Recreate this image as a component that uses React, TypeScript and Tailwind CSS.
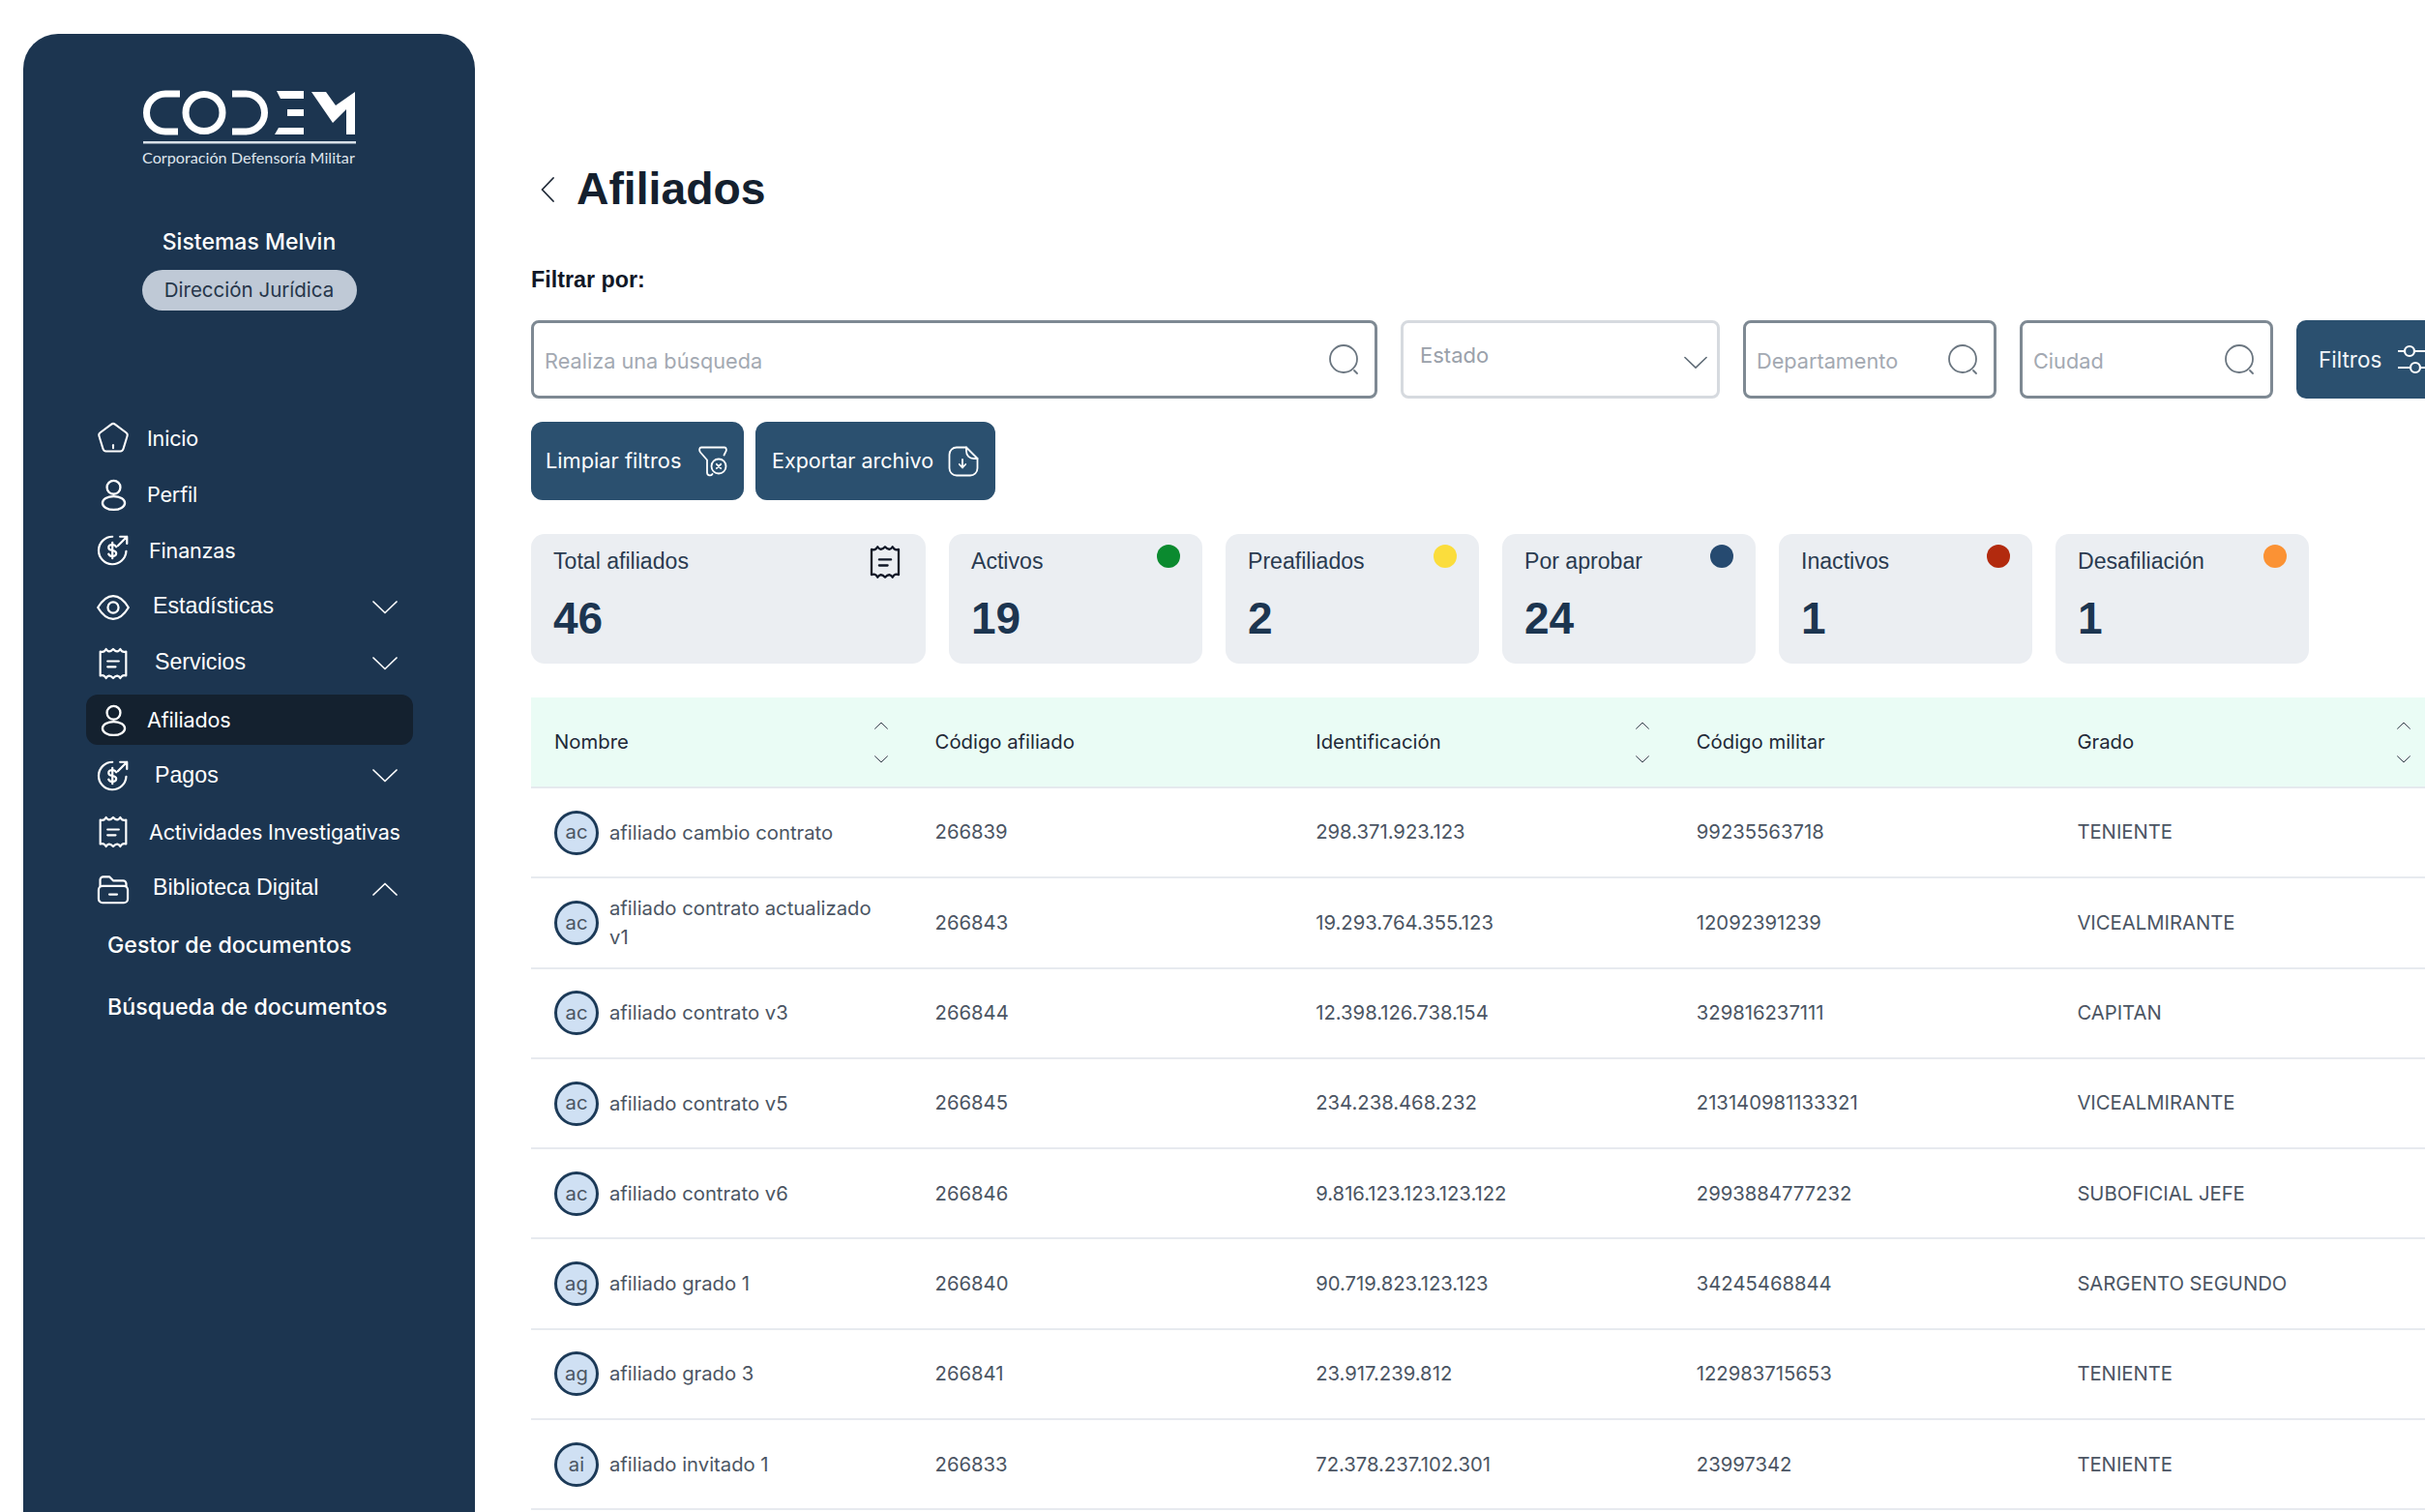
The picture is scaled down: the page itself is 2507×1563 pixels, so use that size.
import type { ReactNode } from "react";

const Svg = ({ children, className = "", strokeWidth = 1.5 }: { children: ReactNode; className?: string; strokeWidth?: number }) => (
  <svg viewBox="0 0 24 24" fill="none" stroke="currentColor" strokeWidth={strokeWidth} strokeLinecap="round" strokeLinejoin="round" className={`shrink-0 ${className}`}>
    {children}
  </svg>
);

const HomeIcon = () => (
  <Svg className="w-[38px] h-[38px]" strokeWidth={1.3}>
    <path d="M10.800 2.900a2 2 0 0 1 2.400 0l7.300 5.500a2 2 0 0 1 .7 2.200l-2.600 8.400a2 2 0 0 1-1.900 1.500H7.300a2 2 0 0 1-1.900-1.500L2.800 10.600a2 2 0 0 1 .7-2.200z" />
    <path d="M12 16.500v2" />
  </Svg>
);
const UserIcon = () => (
  <Svg className="w-[37px] h-[37px]">
    <circle cx="12" cy="7" r="4.500" />
    <ellipse cx="12" cy="17.500" rx="7.500" ry="4.500" />
  </Svg>
);
const MoneyIcon = () => (
  <Svg className="w-[38px] h-[38px]" strokeWidth={1.4}>
    <path d="M20.500 12.500a9 9 0 1 1-9-9.500" />
    <path d="M15 9l6-6M16.500 3H21v4.500" />
    <path d="M14 9.700c-.5-1-1.400-1.500-2.500-1.500-1.300 0-2.500.7-2.500 1.900s1.100 1.700 2.500 1.900 2.500.7 2.500 1.900-1.200 1.900-2.500 1.900c-1.100 0-2-.5-2.500-1.500M11.500 6.800v10.400" />
  </Svg>
);
const EyeIcon = () => (
  <Svg className="w-[38px] h-[38px]" strokeWidth={1.4}>
    <path d="M2 12c3-5 6.500-7.500 10-7.500s7 2.500 10 7.500c-3 5-6.500 7.500-10 7.500S5 17 2 12z" />
    <circle cx="12" cy="12" r="3.500" />
  </Svg>
);
const ReceiptIcon = ({ className = "w-[40px] h-[40px]" }: { className?: string }) => (
  <Svg className={className} strokeWidth={1.3}>
    <path d="M4 4.500c1.500.6 2.700.2 3.600-1.500 1 1.600 2.400 2.200 4.400 0 2 2.200 3.400 1.600 4.400 0 .9 1.700 2.100 2.100 3.600 1.500v15c-1.500-.6-2.700-.2-3.600 1.500-1-1.600-2.400-2.200-4.400 0-2-2.200-3.400-1.600-4.400 0-.9-1.700-2.100-2.100-3.600-1.500z" />
    <path d="M8.500 10.500h7M8.500 14h5" />
  </Svg>
);
const FolderIcon = () => (
  <Svg className="w-[38px] h-[38px]" strokeWidth={1.4}>
    <path d="M3.500 10V6a2 2 0 0 1 2-2h4l2.500 2.500h6.500a2 2 0 0 1 2 2V10" />
    <rect x="2.500" y="10" width="19" height="11" rx="2.500" />
    <path d="M9.500 15.500h5" />
  </Svg>
);
const Chevron = ({ up = false, className = "" }: { up?: boolean; className?: string }) => (
  <svg viewBox="0 0 26 14" fill="none" stroke="currentColor" strokeWidth="1.700" strokeLinecap="round" strokeLinejoin="round" className={className}>
    <path d={up ? "M1 13L13 1.500 25 13" : "M1 1l12 11.500L25 1"} />
  </svg>
);
const SearchIcon = () => (
  <svg viewBox="0 0 34 34" fill="none" stroke="#6b7680" strokeWidth="1.800" strokeLinecap="round" className="w-[34px] h-[34px] shrink-0">
    <circle cx="16" cy="16" r="14" />
    <path d="M27 28l3 3" />
  </svg>
);

const Logo = () => (
  <svg viewBox="0 0 221 57" className="w-[221px] h-[57px]" fill="#fff">
    <path d="M39 5H24a19.500 19.500 0 0 0 0 39h13" fill="none" stroke="#fff" strokeWidth="7" />
    <circle cx="64" cy="24.500" r="19" fill="none" stroke="#fff" strokeWidth="7" />
    <path d="M93 5h14a19.500 19.500 0 0 1 0 39H93" fill="none" stroke="#fff" strokeWidth="7" />
    <polygon points="139,2 167,2 167,10 143,10" />
    <polygon points="150,21 167,21 167,28 150,28" />
    <polygon points="141,40 167,40 167,47 137,47" />
    <polygon points="175,3 190,3 200,17 220,3 220,47 211,47 211,21 197,35" />
    <rect x="1" y="54" width="220" height="2.500" fill="#d8e0e8" />
  </svg>
);

type Item = { label: string; icon: ReactNode; gap: string; arrow?: "up" | "down"; active?: boolean };

const menu: Item[] = [
  { label: "Inicio", icon: <HomeIcon />, gap: "ml-[17px]" },
  { label: "Perfil", icon: <UserIcon />, gap: "ml-[17px]" },
  { label: "Finanzas", icon: <MoneyIcon />, gap: "ml-[19px]" },
  { label: "Estadísticas", icon: <EyeIcon />, gap: "ml-[23px]", arrow: "down" },
  { label: "Servicios", icon: <ReceiptIcon />, gap: "ml-[25px]", arrow: "down" },
  { label: "Afiliados", icon: <UserIcon />, gap: "ml-[17px]", active: true },
  { label: "Pagos", icon: <MoneyIcon />, gap: "ml-[25px]", arrow: "down" },
  { label: "Actividades Investigativas", icon: <ReceiptIcon />, gap: "ml-[19px]" },
  { label: "Biblioteca Digital", icon: <FolderIcon />, gap: "ml-[23px]", arrow: "up" },
];

const MenuRow = ({ item }: { item: Item }) => (
  <div className="h-[58.200px] flex items-center">
    <div className={`w-[338px] h-[52px] flex items-center pl-[10px] pr-[16px] rounded-[12px] ${item.active ? "bg-[#14212f]" : ""}`}>
      <span className="w-[36px] h-[36px] shrink-0 flex items-center justify-center">{item.icon}</span>
      <span className={`${item.gap} whitespace-nowrap ${item.arrow ? "text-[23.200px] font-['Liberation_Sans',sans-serif] mb-[2px]" : "text-[21.600px] tracking-[-0.200px]"}`}>{item.label}</span>
      {item.arrow && <Chevron up={item.arrow === "up"} className="ml-auto w-[26px] h-[14px]" />}
    </div>
  </div>
);

const Sidebar = () => (
  <aside className="ml-[24px] mt-[35px] w-[467px] shrink-0 bg-[#1c3550] rounded-t-[36px] text-white flex flex-col">
    <div className="mt-[57px] ml-[123px] w-[221px]">
      <Logo />
      <p className="text-[16.200px] leading-[20px] mt-[4px] text-[#dfe5ec] whitespace-nowrap font-['Lato',sans-serif]">Corporación Defensoría Militar</p>
    </div>
    <p className="mt-[61px] text-center text-[23px] leading-[32px] font-medium">Sistemas Melvin</p>
    <div className="mt-[13px] mx-auto w-[222px] h-[42px] rounded-full bg-[#bfc9d6] text-[#26364a] text-[20.500px] flex items-center justify-center">Dirección Jurídica</div>
    <nav className="mt-[103px] ml-[65px]">
      {menu.map((item) => (
        <MenuRow key={item.label} item={item} />
      ))}
      <p className="ml-[22px] mt-[12px] text-[23.200px] font-medium leading-[34px] whitespace-nowrap">Gestor de documentos</p>
      <p className="ml-[22px] mt-[30px] text-[23.200px] font-medium leading-[34px] whitespace-nowrap">Búsqueda de documentos</p>
    </nav>
  </aside>
);

const SearchField = ({ placeholder, width }: { placeholder: string; width: string }) => (
  <div className={`${width} h-[81px] shrink-0 border-[3px] border-[#7e8993] rounded-[8px] flex items-center pl-[11px] pr-[14px]`}>
    <input placeholder={placeholder} className="flex-1 min-w-0 bg-transparent text-[21.700px] mt-[3px] outline-none placeholder:text-[#a3a9b2]" />
    <SearchIcon />
  </div>
);

const Filters = () => (
  <div className="mt-[27px] flex gap-[24px]">
    <SearchField placeholder="Realiza una búsqueda" width="w-[875px]" />
    <div className="w-[330px] h-[81px] shrink-0 border-[3px] border-[#d6dadf] rounded-[8px] flex items-center pl-[17px] pr-[10px] text-[22px] text-[#9aa1aa]">
      <span className="mb-[9px]">Estado</span>
      <Chevron className="ml-auto w-[24px] h-[14px] text-[#5f6b76] mt-[6px]" />
    </div>
    <SearchField placeholder="Departamento" width="w-[262px]" />
    <SearchField placeholder="Ciudad" width="w-[262px]" />
    <button className="w-[200px] h-[81px] shrink-0 bg-[#2b506f] rounded-[10px] text-[#f1f5f9] text-[22.500px] flex items-center pl-[23px] gap-[17px]">
      Filtros
      <svg viewBox="0 0 30 33" fill="none" stroke="#fff" strokeWidth="2.200" className="w-[30px] h-[33px] shrink-0">
        <circle cx="12" cy="8" r="5" />
        <circle cx="18" cy="25" r="5" />
        <path d="M0 8h7M17 8h13M0 25h13M23 25h7" />
      </svg>
    </button>
  </div>
);

const Actions = () => (
  <div className="mt-[24px] flex gap-[12px]">
    <button className="w-[220px] h-[81px] bg-[#2b506f] rounded-[12px] text-white text-[21.800px] flex items-center pl-[15px] whitespace-nowrap">
      Limpiar filtros
      <svg viewBox="0 0 30 32" fill="none" stroke="#fff" strokeWidth="1.800" strokeLinecap="round" strokeLinejoin="round" className="w-[30px] h-[32px] ml-[18px]">
        <path d="M3 1.500h24M3 1.500c-2 0-2.500 3-1 5l7 8v13c0 3 4 4 5.500 1.500M27 1.500c2 0 2.500 3 1 5l-1.500 3" />
        <circle cx="21" cy="21" r="7.500" />
        <path d="M18.800 18.800l4.400 4.400M23.200 18.800l-4.400 4.400" />
      </svg>
    </button>
    <button className="w-[248px] h-[81px] bg-[#2b506f] rounded-[12px] text-white text-[21.500px] flex items-center pl-[17px] whitespace-nowrap">
      Exportar archivo
      <svg viewBox="0 0 32 32" fill="none" stroke="#fff" strokeWidth="1.800" strokeLinecap="round" strokeLinejoin="round" className="w-[32px] h-[32px] ml-[15px]">
        <path d="M19 1.500H9a7.500 7.500 0 0 0-7.500 7.500v14A7.500 7.500 0 0 0 9 30.500h14a7.500 7.500 0 0 0 7.500-7.500V13z" />
        <path d="M19 1.500v4a7.500 7.500 0 0 0 7.500 7.500h4" />
        <path d="M15 14v8M11.800 19l3.200 3.500 3.200-3.500" />
      </svg>
    </button>
  </div>
);

const stats = [
  { label: "Activos", value: "19", dot: "bg-[#0b8a2f]" },
  { label: "Preafiliados", value: "2", dot: "bg-[#fbdd3c]" },
  { label: "Por aprobar", value: "24", dot: "bg-[#264a70]" },
  { label: "Inactivos", value: "1", dot: "bg-[#b22a0e]" },
  { label: "Desafiliación", value: "1", dot: "bg-[#fb9234]" },
];

const StatCard = ({ label, value, width, corner }: { label: string; value: string; width: string; corner: ReactNode }) => (
  <div className={`${width} h-[134px] shrink-0 bg-[#ebeef2] rounded-[14px] pl-[23px] pr-[23px] pt-[11px] flex flex-col font-['Liberation_Sans',sans-serif]`}>
    <div className="flex justify-between items-start h-[36px]">
      <span className="text-[23.100px] leading-[34px] text-[#2a3b50]">{label}</span>
      {corner}
    </div>
    <span className="mt-[14px] text-[46px] leading-[52px] font-bold text-[#1c3550]">{value}</span>
  </div>
);

const Stats = () => (
  <div className="mt-[35px] flex gap-[24px]">
    <StatCard label="Total afiliados" value="46" width="w-[408px]" corner={<span className="text-[#111827] mt-[-3px] mr-[-2px]"><ReceiptIcon className="w-[42px] h-[42px]" /></span>} />
    {stats.map((s) => (
      <StatCard key={s.label} label={s.label} value={s.value} width="w-[262px]" corner={<span className={`w-[24px] h-[24px] rounded-full ${s.dot}`} />} />
    ))}
  </div>
);

const rows = [
  ["ac", "afiliado cambio contrato", "266839", "298.371.923.123", "99235563718", "TENIENTE"],
  ["ac", "afiliado contrato actualizado v1", "266843", "19.293.764.355.123", "12092391239", "VICEALMIRANTE"],
  ["ac", "afiliado contrato v3", "266844", "12.398.126.738.154", "329816237111", "CAPITAN"],
  ["ac", "afiliado contrato v5", "266845", "234.238.468.232", "213140981133321", "VICEALMIRANTE"],
  ["ac", "afiliado contrato v6", "266846", "9.816.123.123.123.122", "2993884777232", "SUBOFICIAL JEFE"],
  ["ag", "afiliado grado 1", "266840", "90.719.823.123.123", "34245468844", "SARGENTO SEGUNDO"],
  ["ag", "afiliado grado 3", "266841", "23.917.239.812", "122983715653", "TENIENTE"],
  ["ai", "afiliado invitado 1", "266833", "72.378.237.102.301", "23997342", "TENIENTE"],
];

const HeaderCell = ({ label, sort }: { label: string; sort?: boolean }) => (
  <div className="h-[92px] pl-[24px] pr-[25px] flex items-center justify-between text-[20.300px] text-[#1f2937]">
    {label}
    {sort && (
      <span className="flex flex-col gap-[27px] text-[#1f2937]">
        <Chevron up className="w-[14px] h-[8px]" />
        <Chevron className="w-[14px] h-[8px]" />
      </span>
    )}
  </div>
);

const Table = () => (
  <div className="mt-[35px] w-[1968px] text-[20.250px] text-[#4b5563]">
    <div className="grid grid-cols-[repeat(5,393.600px)] bg-[#eafcf5] border-b-2 border-[#e5e9ee]">
      <HeaderCell label="Nombre" sort />
      <HeaderCell label="Código afiliado" />
      <HeaderCell label="Identificación" sort />
      <HeaderCell label="Código militar" />
      <HeaderCell label="Grado" sort />
    </div>
    {rows.map(([initials, name, code, id, military, rank]) => (
      <div key={name} className="grid grid-cols-[repeat(5,393.600px)] h-[93.300px] items-center border-b-2 border-[#e7eaef]">
        <div className="pl-[24px] flex items-center gap-[11px]">
          <span className="w-[46px] h-[46px] shrink-0 rounded-full border-[3px] border-[#1c3a58] bg-[#cfe0f3] flex items-center justify-center">{initials}</span>
          <span className="w-[290px] leading-[30px]">{name}</span>
        </div>
        <div className="pl-[24px]">{code}</div>
        <div className="pl-[24px]">{id}</div>
        <div className="pl-[24px]">{military}</div>
        <div className="pl-[24px]">{rank}</div>
      </div>
    ))}
  </div>
);

export default function App() {
  return (
    <div className="h-[1563px] w-full overflow-hidden bg-white flex font-['Inter',sans-serif]">
      <Sidebar />
      <main className="ml-[58px] pt-[166px] flex-1 min-w-0">
        <div className="h-[60px] flex items-center">
          <svg viewBox="0 0 14 26" fill="none" stroke="#1f2937" strokeWidth="1.800" strokeLinecap="round" strokeLinejoin="round" className="w-[14px] h-[26px] ml-[10px]">
            <path d="M13 1L1.500 13 13 25" />
          </svg>
          <h1 className="ml-[23px] text-[46.300px] font-bold text-[#14202e] font-['Liberation_Sans',sans-serif]">Afiliados</h1>
        </div>
        <p className="mt-[48px] h-[30px] text-[23.300px] leading-[30px] font-bold text-[#111827] font-['Liberation_Sans',sans-serif]">Filtrar por:</p>
        <Filters />
        <Actions />
        <Stats />
        <Table />
      </main>
    </div>
  );
}
